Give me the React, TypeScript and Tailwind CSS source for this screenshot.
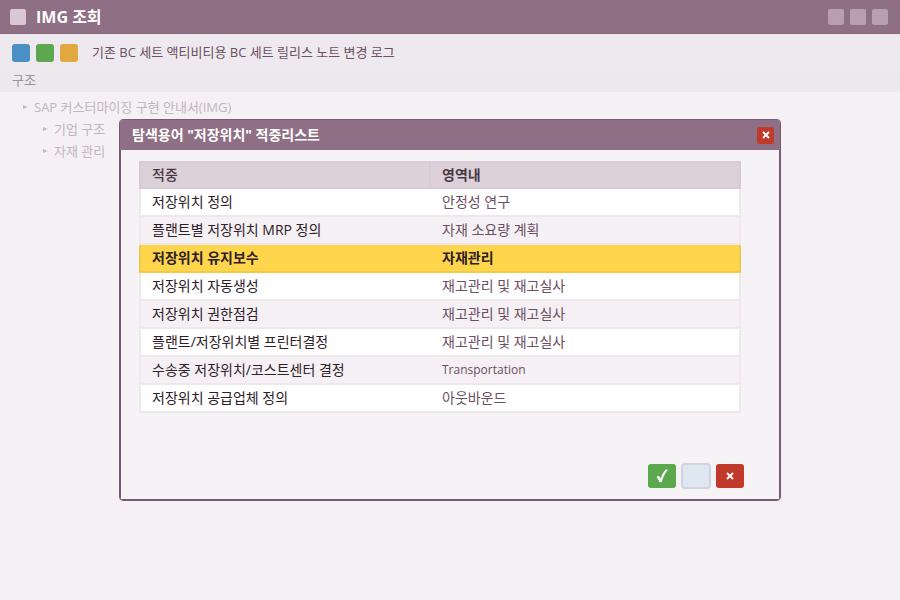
import { useState } from "react";
import clsx from "clsx";

const hits = [
  { id: 1, name: "저장위치 정의", area: "안정성 연구" },
  { id: 2, name: "플랜트별 저장위치 MRP 정의", area: "자재 소요량 계획", shaded: true },
  { id: 3, name: "저장위치 유지보수", area: "자재관리" },
  { id: 4, name: "저장위치 자동생성", area: "재고관리 및 재고실사" },
  { id: 5, name: "저장위치 권한점검", area: "재고관리 및 재고실사", shaded: true },
  { id: 6, name: "플랜트/저장위치별 프린터결정", area: "재고관리 및 재고실사" },
  { id: 7, name: "수송중 저장위치/코스트센터 결정", area: "Transportation", latin: true, shaded: true },
  { id: 8, name: "저장위치 공급업체 정의", area: "아웃바운드" },
];

const treeNodes = [
  { label: "SAP 커스터마이징 구현 안내서(IMG)", indent: "pl-[22px]" },
  { label: "기업 구조", indent: "pl-[42px]" },
  { label: "자재 관리", indent: "pl-[42px]" },
];

const toolColors = ["bg-[#4a90c4]", "bg-[#5ba84f]", "bg-[#e0a83e]"];

const CrossIcon = () => (
  <svg viewBox="0 0 8 8" className="h-2 w-2" fill="none" stroke="currentColor" strokeWidth="1.8">
    <path d="M1 1 7 7M7 1 1 7" />
  </svg>
);

const CheckIcon = () => (
  <svg viewBox="0 0 12 14" className="h-[14px] w-3" fill="currentColor">
    <path d="M.4 8 2.800 6.800C3.600 7.700 4.100 8.600 4.500 9.700 5.900 5.900 7.700 2.900 9.800.6L12 .6C9.200 4 7 8.200 5.600 13.200L3.400 13.200C2.800 11.200 1.800 9.400.4 8Z" />
  </svg>
);

const TitleBar = () => (
  <header className="flex h-[34px] items-center border-b border-[#866679] bg-[#8f6f85] px-3 pl-[10px] text-white">
    <span className="mr-[10px] h-4 w-4 rounded-xs bg-[#d9c7d3]" />
    <h1 className="text-[16px] leading-5 font-bold">IMG 조회</h1>
    <div className="ml-auto flex gap-[6px]">
      <button aria-label="최소화" className="h-4 w-4 rounded-xs bg-[#b89eb1]" />
      <button aria-label="최대화" className="h-4 w-4 rounded-xs bg-[#b89eb1]" />
      <button aria-label="닫기" className="h-4 w-4 rounded-xs bg-[#b89eb1]" />
    </div>
  </header>
);

const Toolbar = () => (
  <div className="flex h-9 items-center gap-[6px] bg-[#eee9ef] px-3 pt-[2px]">
    {toolColors.map((color) => (
      <button key={color} aria-label="도구" className={clsx("h-[18px] w-[18px] rounded-[3px]", color)} />
    ))}
    <p className="ml-2 pb-[2px] text-[13px] leading-5 text-[#6b4f62]">
      기존 BC 세트 액티비티용 BC 세트 릴리스 노트 변경 로그
    </p>
  </div>
);

const HitTable = ({ selected, onSelect }: { selected: number; onSelect: (id: number) => void }) => (
  <table className="w-full table-fixed border-collapse text-left text-[14px] leading-5">
    <thead>
      <tr className="h-[26px] bg-[#ddd1d9] text-[#4a3944]">
        <th className="w-[290px] border-2 border-[#d8cbd4] py-0 pl-[11px] font-medium">적중</th>
        <th className="border-2 border-[#d8cbd4] py-0 pl-[11px] font-bold">영역내</th>
      </tr>
    </thead>
    <tbody>
      {hits.map((hit) => {
        const active = hit.id === selected;
        return (
          <tr
            key={hit.id}
            onClick={() => onSelect(hit.id)}
            className={clsx(
              "h-7 cursor-default border-2 text-[#2d2028]",
              active ? "border-[#f0ca48] bg-[#ffd54b] font-bold" : "border-[#eee7ec]",
              !active && (hit.shaded ? "bg-[#f5f0f4]" : "bg-white")
            )}
          >
            <td className="py-0 pl-[11px]">{hit.name}</td>
            <td className={clsx("py-0 pl-3", !active && "text-[#6b4f62]", hit.latin && "text-[12px]")}>{hit.area}</td>
          </tr>
        );
      })}
    </tbody>
  </table>
);

const App = () => {
  const [open, setOpen] = useState(true);
  const [selected, setSelected] = useState(3);
  const close = () => setOpen(false);

  return (
    <div className="relative min-h-screen bg-[#f5f0f4] font-['Open_Sans','Noto_Sans_CJK_KR',sans-serif]">
      <TitleBar />
      <Toolbar />
      <h2 className="h-[22px] bg-[#ede8eb] px-3 text-[13px] leading-5 text-[#9c9099]">구조</h2>
      <ul className="pt-1 text-[13px] leading-[22px] text-[#c0b6bd]">
        {treeNodes.map((node) => (
          <li key={node.label} className={clsx("flex items-center", node.indent)}>
            <svg viewBox="0 0 6 6" className="mr-[6px] h-[6px] w-[6px]" fill="currentColor">
              <path d="M1 1 5.500 3 1 5Z" />
            </svg>
            {node.label}
          </li>
        ))}
      </ul>

      {open && (
        <div className="absolute inset-0 flex items-start justify-center pt-[119px]">
          <section
            role="dialog"
            aria-labelledby="hit-title"
            className="w-[662px] max-w-full overflow-hidden rounded-[4px] border border-[#7a5a70] bg-[#f5f3f5]"
          >
            <div className="flex h-[30px] items-center bg-[#8f6f85] pr-[6px] pl-3 text-white">
              <h2 id="hit-title" className="text-[14px] leading-5 font-bold">
                탐색용어 "저장위치" 적중리스트
              </h2>
              <button
                aria-label="닫기"
                onClick={close}
                className="ml-auto flex h-[17px] w-[17px] items-center justify-center rounded-xs bg-[#c0392b]"
              >
                <CrossIcon />
              </button>
            </div>
            <div className="border-x border-b border-[#7a5a70] pt-[11px] pr-[38px] pb-[10px] pl-[18px]">
              <HitTable selected={selected} onSelect={setSelected} />
              <div className="-mr-[3px] mt-[50px] flex items-center justify-end gap-[5px] text-white">
                <button
                  aria-label="확인"
                  onClick={close}
                  className="flex h-6 w-7 items-center justify-center rounded-[3px] bg-[#5ba84f]"
                >
                  <CheckIcon />
                </button>
                <button
                  aria-label="옵션"
                  className="h-[26px] w-[30px] rounded-[4px] border-2 border-[#cdd5de] bg-[#dfe7f0]"
                />
                <button
                  aria-label="취소"
                  onClick={close}
                  className="flex h-6 w-7 items-center justify-center rounded-[3px] bg-[#c0392b]"
                >
                  <CrossIcon />
                </button>
              </div>
            </div>
          </section>
        </div>
      )}
    </div>
  );
};

export default App;
